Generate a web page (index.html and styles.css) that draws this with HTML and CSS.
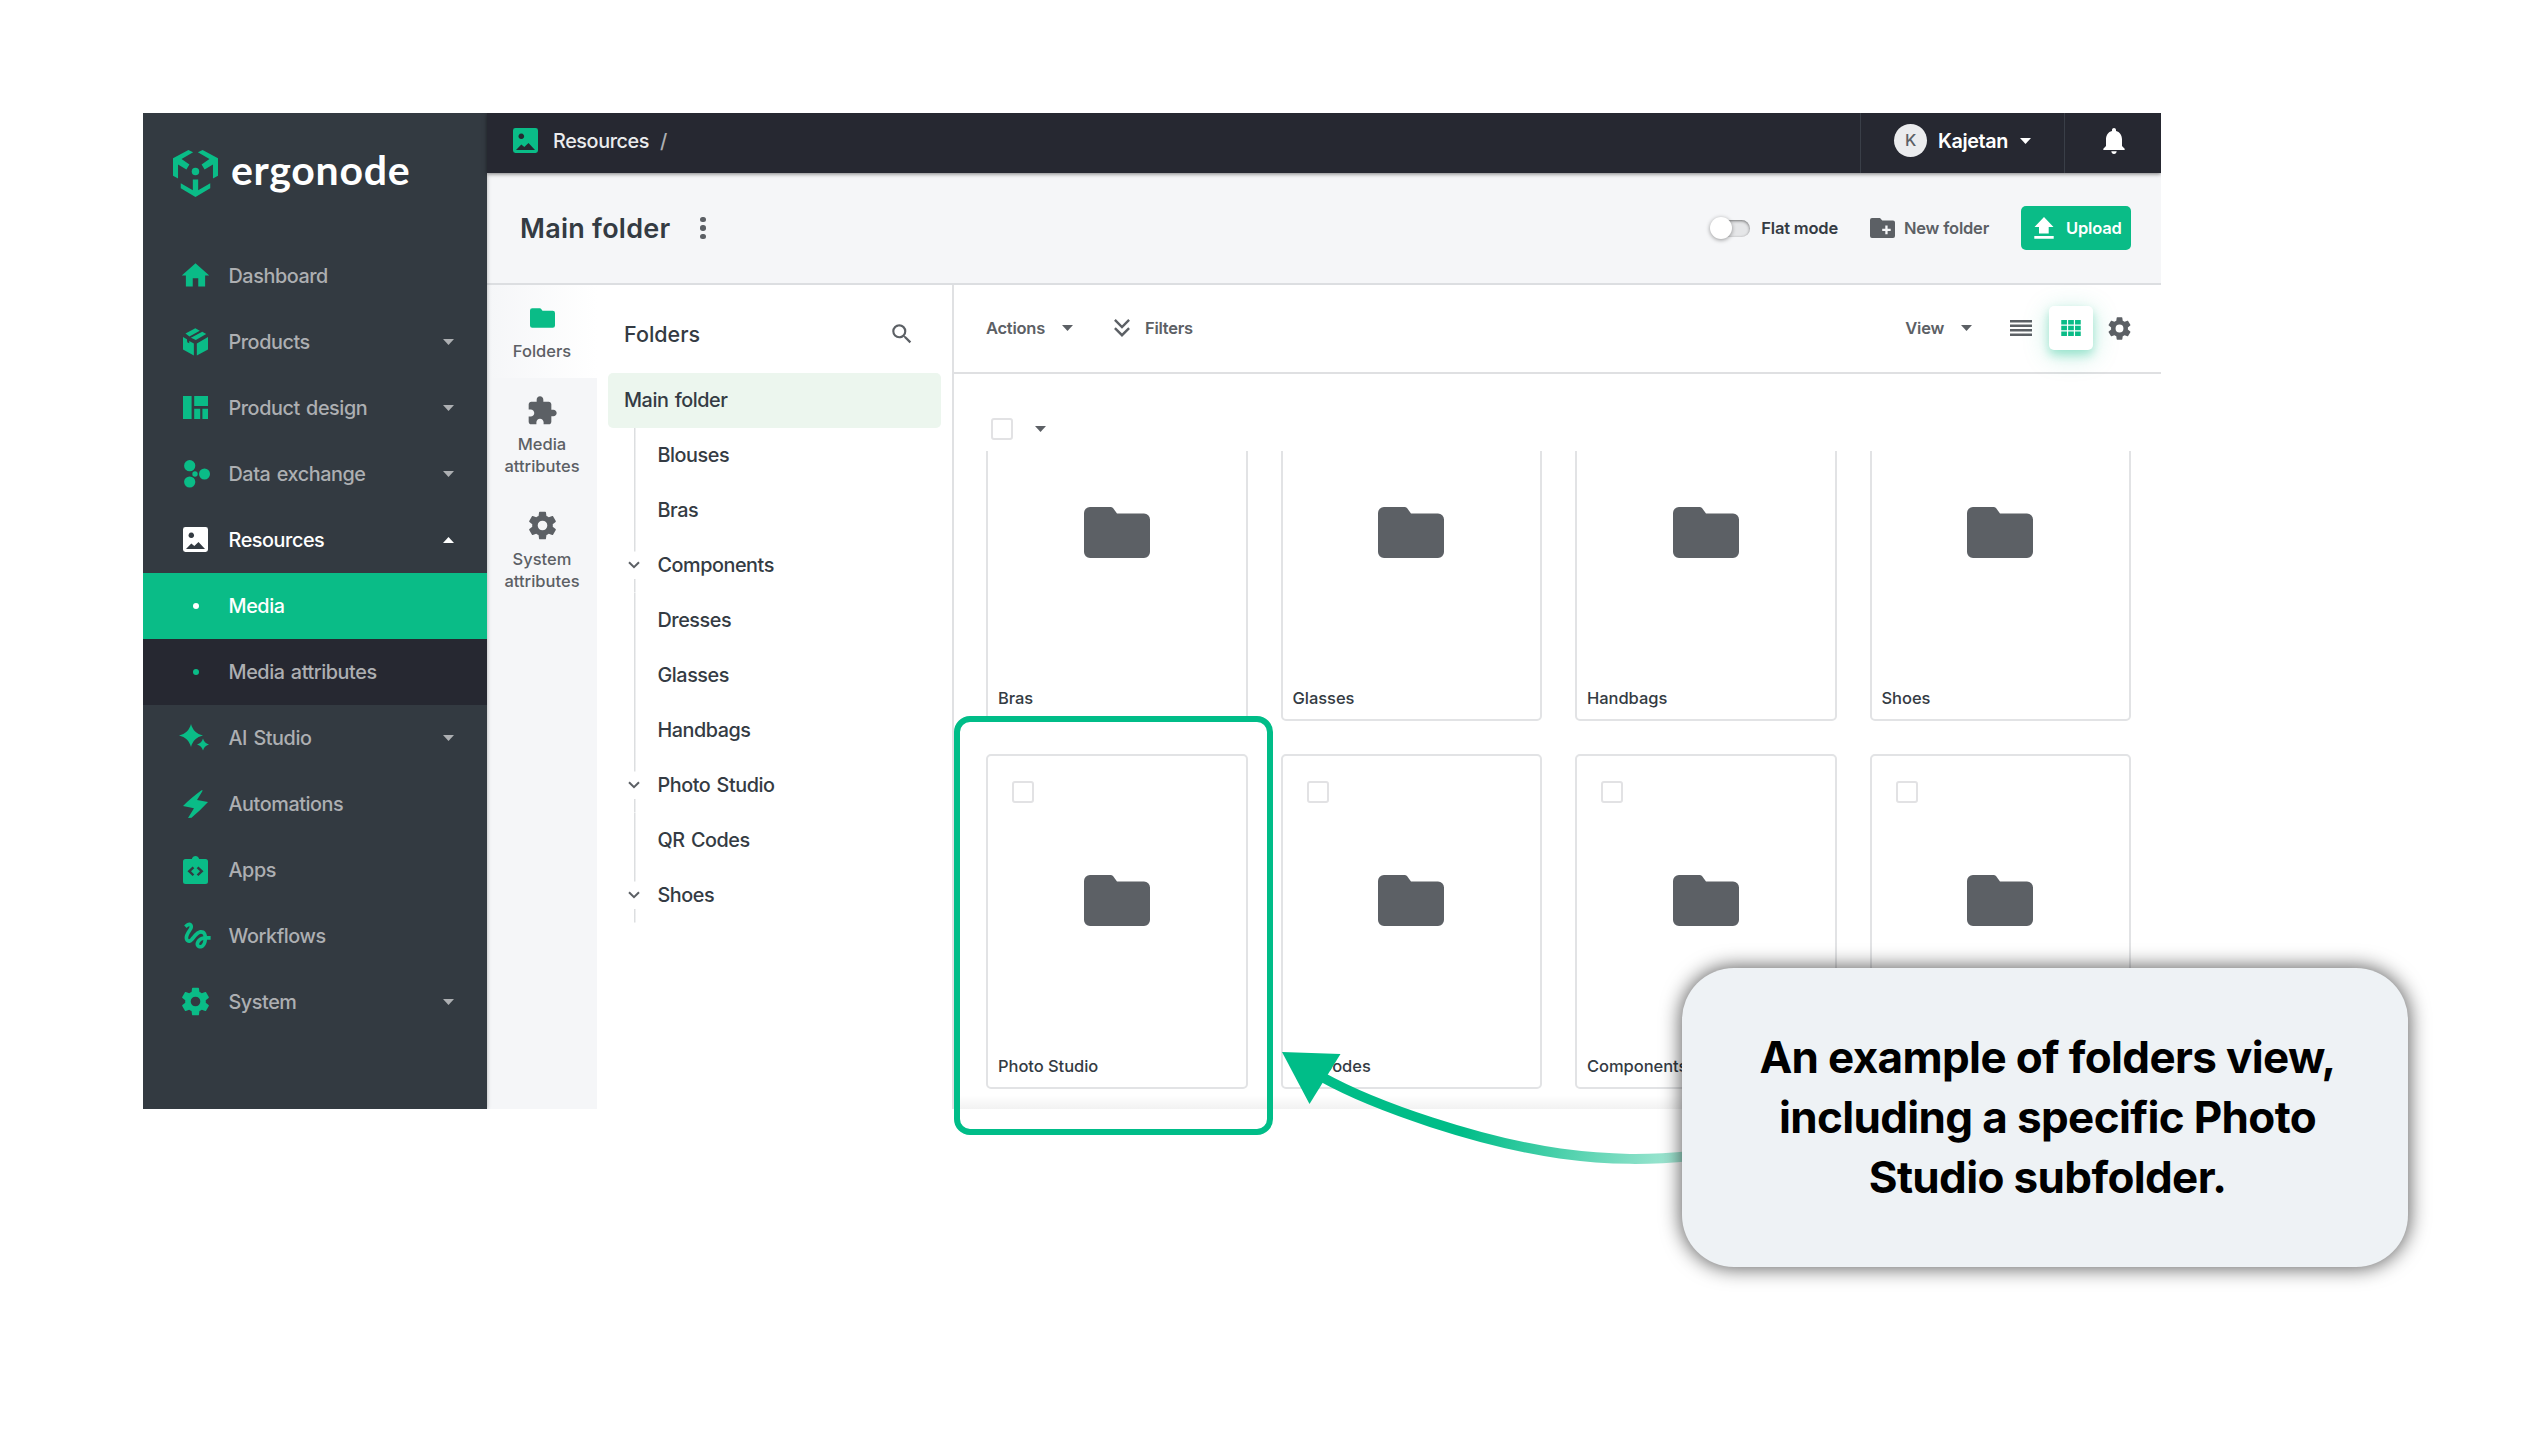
FILE: index.html
```html
<!DOCTYPE html>
<html lang="en">
<head>
    <meta charset="UTF-8">
    <meta name="viewport" content="width=device-width, initial-scale=1.0">
    <title>Media - Main folder</title>
    <link rel="stylesheet" href="styles.css">
</head>
<body>

<!-- icons -->
<svg class="sprite" aria-hidden="true">
    <symbol id="i-home" viewBox="0 0 24 24"><path d="M10 20v-6h4v6h5v-8h3L12 3 2 12h3v8z"/></symbol>
    <symbol id="i-box" viewBox="0 0 25.3 28"><path d="M2.5 5.5 12.5 0 17 2.5 6.5 8.5zM8 9.8 19.5 3.7l4 2.3L13 12zM0 9l4 2.3.3 2.9 2 1.1V13l4.7 2.5v12.2L0 21.5zM14 15.5 25.3 9v12.5L14 27.7z"/></symbol>
    <symbol id="i-design" viewBox="0 0 25 23"><path d="M0 0h8.6v23H0zM11.2 0H25v10H11.2zM11.2 12.7h6V23h-6zM19.4 12.7H25V23h-5.6z"/></symbol>
    <symbol id="i-data" viewBox="0 0 26 28"><circle cx="5.7" cy="5.7" r="5.6"/><circle cx="5.7" cy="22" r="5.6"/><circle cx="20.5" cy="14" r="5.5"/><circle cx="11" cy="14" r="2.7"/></symbol>
    <symbol id="i-image" viewBox="0 0 25 25"><path fill-rule="evenodd" d="M2.4 0h20.2A2.4 2.4 0 0 1 25 2.4v20.2a2.4 2.4 0 0 1-2.4 2.4H2.4A2.4 2.4 0 0 1 0 22.6V2.4A2.4 2.4 0 0 1 2.4 0zM8.3 5.5a2.8 2.8 0 1 0 .01 0zM3 22h19l-6.5-7-4.2 4-3-2.5z"/></symbol>
    <symbol id="i-spark" viewBox="0 0 30 27"><path d="M12 0c1.6 6 5.5 10 12 11.5C17.5 13 13.6 17 12 23 10.4 17 6.5 13 0 11.5 6.5 10 10.4 6 12 0zM24 14.5c.8 3 2.6 5 6 6-3.4 1-5.2 3-6 6-.8-3-2.6-5-6-6 3.4-1 5.2-3 6-6z"/></symbol>
    <symbol id="i-bolt" viewBox="0 0 25 28"><path d="M18.5.2C12 5 5 10.5 0 16l11 2.2-6 9.8 3.5-.3C14 23 20 17.5 25 12L14 10 19.8.4z"/></symbol>
    <symbol id="i-apps" viewBox="0 0 25 28"><path fill-rule="evenodd" d="M2.5 3h6.3c.6-1.8 2-3 3.7-3s3.1 1.2 3.7 3h6.3A2.5 2.5 0 0 1 25 5.5v20a2.5 2.5 0 0 1-2.5 2.5h-20A2.5 2.5 0 0 1 0 25.5v-20A2.5 2.5 0 0 1 2.5 3zM9.6 10.5 4.5 15.3l5.1 4.8 1.7-1.7L8 15.3l3.3-3.1zM15.4 10.5l-1.7 1.7 3.3 3.1-3.3 3.1 1.7 1.7 5.1-4.8z"/></symbol>
    <symbol id="i-flow" viewBox="0 0 24 24"><path d="M4.59 6.89c.7-.71 1.4-1.35 1.71-1.22.5.2 0 1.03-.3 1.52-.25.42-2.86 3.89-2.86 6.31 0 1.28.48 2.34 1.34 2.98.75.56 1.74.73 2.64.46 1.07-.31 1.95-1.4 3.06-2.77 1.21-1.49 2.83-3.44 4.08-3.44 1.63 0 1.65 1.01 1.76 1.79-3.78.64-5.38 3.67-5.38 5.37 0 1.7 1.44 3.09 3.21 3.09 1.63 0 4.29-1.33 4.69-6.1H21v-2.5h-2.47c-.15-1.65-1.09-4.2-4.03-4.2-2.25 0-4.18 1.91-4.94 2.84-.58.73-2.06 2.48-2.29 2.72-.25.3-.68.84-1.11.84-.45 0-.72-.83-.36-1.92.35-1.09 1.4-2.86 1.85-3.52.78-1.14 1.3-1.92 1.3-3.28C8.95 3.69 7.31 3 6.44 3 5.12 3 3.97 4 3.72 4.25c-.36.36-.66.66-.88.93l1.75 1.71zm9.29 11.66c-.31 0-.74-.26-.74-.72 0-.6.73-2.2 2.87-2.76-.3 2.69-1.43 3.48-2.13 3.48z"/></symbol>
    <symbol id="i-cog" viewBox="0 0 24 24"><path d="M12,15.5A3.5,3.5 0 0,1 8.5,12A3.5,3.5 0 0,1 12,8.5A3.5,3.5 0 0,1 15.5,12A3.5,3.5 0 0,1 12,15.5M19.43,12.97C19.47,12.65 19.5,12.33 19.5,12C19.5,11.67 19.47,11.34 19.43,11L21.54,9.37C21.73,9.22 21.78,8.95 21.66,8.73L19.66,5.27C19.54,5.05 19.27,4.96 19.05,5.05L16.56,6.05C16.04,5.66 15.5,5.32 14.87,5.07L14.5,2.42C14.46,2.18 14.25,2 14,2H10C9.75,2 9.54,2.18 9.5,2.42L9.13,5.07C8.5,5.32 7.96,5.66 7.44,6.05L4.95,5.05C4.73,4.96 4.46,5.05 4.34,5.27L2.34,8.73C2.21,8.95 2.27,9.22 2.46,9.37L4.57,11C4.53,11.34 4.5,11.67 4.5,12C4.5,12.33 4.53,12.65 4.57,12.97L2.46,14.63C2.27,14.78 2.21,15.05 2.34,15.27L4.34,18.73C4.46,18.95 4.73,19.03 4.95,18.95L7.44,17.94C7.96,18.34 8.5,18.68 9.13,18.93L9.5,21.58C9.54,21.82 9.75,22 10,22H14C14.25,22 14.46,21.82 14.5,21.58L14.87,18.93C15.5,18.67 16.04,18.34 16.56,17.94L19.05,18.95C19.27,19.03 19.54,18.95 19.66,18.73L21.66,15.27C21.78,15.05 21.73,14.78 21.54,14.63L19.43,12.97Z"/></symbol>
    <symbol id="i-folder" viewBox="0 0 66 51"><path d="M6 0h20.5q1.5 0 2.5 1l4 5.5h27a6 6 0 0 1 6 6V45a6 6 0 0 1-6 6H6a6 6 0 0 1-6-6V6a6 6 0 0 1 6-6z"/></symbol>
    <symbol id="i-puzzle" viewBox="0 0 24 24"><path d="M20.5 11H19V7c0-1.1-.9-2-2-2h-4V3.5C13 2.12 11.88 1 10.5 1S8 2.12 8 3.5V5H4c-1.1 0-1.99.9-1.99 2v3.8H3.5c1.49 0 2.7 1.21 2.7 2.7s-1.21 2.7-2.7 2.7H2V20c0 1.1.9 2 2 2h3.8v-1.5c0-1.49 1.21-2.7 2.7-2.7 1.49 0 2.7 1.21 2.7 2.7V22H17c1.1 0 2-.9 2-2v-4h1.5c1.38 0 2.5-1.12 2.5-2.5S21.88 11 20.5 11z"/></symbol>
    <symbol id="i-search" viewBox="0 0 24 24"><path d="M15.5 14h-.79l-.28-.27A6.471 6.471 0 0 0 16 9.5 6.5 6.5 0 1 0 9.5 16c1.61 0 3.09-.59 4.23-1.57l.27.28v.79l5 4.99L20.49 19l-4.99-5zm-6 0C7.01 14 5 11.99 5 9.5S7.01 5 9.5 5 14 7.01 14 9.5 11.99 14 9.5 14z"/></symbol>
    <symbol id="i-bell" viewBox="4 2.5 16 19.5"><path d="M12 22c1.1 0 2-.9 2-2h-4c0 1.1.89 2 2 2zm6-6v-5c0-3.07-1.64-5.64-4.5-6.32V4c0-.83-.67-1.5-1.5-1.5s-1.5.67-1.5 1.5v.68C7.63 5.36 6 7.92 6 11v5l-2 2v1h16v-1l-2-2z"/></symbol>
    <symbol id="i-newfolder" viewBox="0 0 25 20"><path fill-rule="evenodd" d="M2 0h8l2.3 2.4H23a2 2 0 0 1 2 2V18a2 2 0 0 1-2 2H2a2 2 0 0 1-2-2V2a2 2 0 0 1 2-2zM15.3 7.5v3.2h-3.1v2.3h3.1v3.2h2.3V13h3.1v-2.3h-3.1V7.5z"/></symbol>
    <symbol id="i-upload" viewBox="0 0 20 22"><path d="M10 0 19.5 10H14.7v6.5H5V10H.5zM.3 19h19.4v2.7H.3z"/></symbol>
    <symbol id="i-caret" viewBox="0 0 11 6"><path d="M0 0h11L5.5 6z"/></symbol>
    <symbol id="i-chevron" viewBox="0 0 12 8"><path d="M1 1.2 6 6.2l5-5" fill="none" stroke="currentColor" stroke-width="2"/></symbol>
    <symbol id="i-filters" viewBox="0 0 16 18"><path d="M.9.9 8 8 15.1.9M.9 9.1 8 16.2l7.1-7.1" fill="none" stroke="currentColor" stroke-width="2.4"/></symbol>
    <symbol id="i-list" viewBox="0 0 22 16"><path d="M0 0h22v2.5H0zM0 4.5h22V7H0zM0 9h22v2.5H0zM0 13.5h22V16H0z"/></symbol>
    <symbol id="i-grid" viewBox="0 0 19.5 16"><path d="M0 0h5.7v4.5H0zM6.9 0h5.7v4.5H6.9zM13.8 0h5.7v4.5h-5.7zM0 5.7h5.7v4.5H0zM6.9 5.7h5.7v4.5H6.9zM13.8 5.7h5.7v4.5h-5.7zM0 11.5h5.7V16H0zM6.9 11.5h5.7V16H6.9zM13.8 11.5h5.7V16h-5.7z"/></symbol>
</svg>

<div class="app">

    <aside class="sidebar">
        <div class="logo">
            <svg class="logo-mark" viewBox="0 0 44.7 46.7"><path d="M0 8.3 15.3 0 20 2.3 8.5 9l7.8 5.3-3 5L5 14.3v14L0 25.7zM44.7 8.3 29.4 0l-4.7 2.3L36.2 9l-7.8 5.3 3 5 8.3-5v14l5-2.6zM19.7 29.3H25V40l12-7v5L22.3 46.7 7.7 38v-5l12 7z"/><circle cx="22.3" cy="21.3" r="3.7"/></svg>
            <span class="logo-text">ergonode</span>
        </div>
        <nav class="nav">
            <a class="nav-item"><span class="nav-icon"><svg width="33" height="33"><use href="#i-home"/></svg></span>Dashboard</a>
            <a class="nav-item"><span class="nav-icon"><svg width="25" height="28"><use href="#i-box"/></svg></span>Products<svg class="caret"><use href="#i-caret"/></svg></a>
            <a class="nav-item"><span class="nav-icon"><svg width="25" height="23"><use href="#i-design"/></svg></span>Product design<svg class="caret"><use href="#i-caret"/></svg></a>
            <a class="nav-item"><span class="nav-icon shift"><svg width="26" height="28"><use href="#i-data"/></svg></span>Data exchange<svg class="caret"><use href="#i-caret"/></svg></a>
            <a class="nav-item open"><span class="nav-icon"><svg width="25" height="25"><use href="#i-image"/></svg></span>Resources<svg class="caret up"><use href="#i-caret"/></svg></a>
            <a class="nav-item sub active"><span class="nav-icon"><i class="dot"></i></span>Media</a>
            <a class="nav-item sub"><span class="nav-icon"><i class="dot"></i></span>Media attributes</a>
            <a class="nav-item"><span class="nav-icon shift-left"><svg width="30" height="27"><use href="#i-spark"/></svg></span>AI Studio<svg class="caret"><use href="#i-caret"/></svg></a>
            <a class="nav-item"><span class="nav-icon"><svg width="25" height="28"><use href="#i-bolt"/></svg></span>Automations</a>
            <a class="nav-item"><span class="nav-icon"><svg width="25" height="28"><use href="#i-apps"/></svg></span>Apps</a>
            <a class="nav-item"><span class="nav-icon shift"><svg width="35" height="35"><use href="#i-flow"/></svg></span>Workflows</a>
            <a class="nav-item"><span class="nav-icon"><svg width="33" height="33"><use href="#i-cog"/></svg></span>System<svg class="caret"><use href="#i-caret"/></svg></a>
        </nav>
    </aside>

    <div class="page">
        <header class="topbar">
            <svg class="crumb-icon" width="25" height="25"><use href="#i-image"/></svg>
            <span class="crumb">Resources</span>
            <span class="slash">/</span>
            <div class="user">
                <span class="avatar">K</span>
                <span class="user-name">Kajetan</span>
                <svg class="caret"><use href="#i-caret"/></svg>
            </div>
            <div class="bell"><svg width="22" height="26"><use href="#i-bell"/></svg></div>
        </header>

        <div class="titlebar">
            <h1>Main folder</h1>
            <span class="kebab"><i></i><i></i><i></i></span>
            <label class="toggle"><span class="track"><span class="knob"></span></span>Flat mode</label>
            <button class="new-folder"><svg width="25" height="20"><use href="#i-newfolder"/></svg>New folder</button>
            <button class="upload"><svg width="20" height="22"><use href="#i-upload"/></svg>Upload</button>
        </div>

        <div class="content">
            <div class="tabs">
                <a class="tab selected"><span class="tab-icon"><svg width="25" height="20"><use href="#i-folder"/></svg></span>Folders</a>
                <a class="tab"><span class="tab-icon"><svg width="32" height="32"><use href="#i-puzzle"/></svg></span>Media attributes</a>
                <a class="tab"><span class="tab-icon"><svg width="33" height="33"><use href="#i-cog"/></svg></span>System attributes</a>
            </div>

            <section class="tree">
                <div class="tree-head">
                    <h2>Folders</h2>
                    <svg width="26" height="26"><use href="#i-search"/></svg>
                </div>
                <div class="tree-root">Main folder</div>
                <ul class="tree-list">
                    <li><span class="rail"></span>Blouses</li>
                    <li><span class="rail"></span>Bras</li>
                    <li><span class="rail split"><svg><use href="#i-chevron"/></svg></span>Components</li>
                    <li><span class="rail"></span>Dresses</li>
                    <li><span class="rail"></span>Glasses</li>
                    <li><span class="rail"></span>Handbags</li>
                    <li><span class="rail split"><svg><use href="#i-chevron"/></svg></span>Photo Studio</li>
                    <li><span class="rail"></span>QR Codes</li>
                    <li><span class="rail split"><svg><use href="#i-chevron"/></svg></span>Shoes</li>
                </ul>
            </section>

            <section class="browser">
                <div class="toolbar">
                    <span class="tool">Actions</span>
                    <svg class="caret"><use href="#i-caret"/></svg>
                    <svg class="filters-icon" width="16" height="18"><use href="#i-filters"/></svg>
                    <span class="tool">Filters</span>
                    <span class="tool view">View</span>
                    <svg class="caret"><use href="#i-caret"/></svg>
                    <svg class="list-icon" width="22" height="16"><use href="#i-list"/></svg>
                    <span class="grid-button"><svg width="20" height="16"><use href="#i-grid"/></svg></span>
                    <svg class="cog" width="27" height="27"><use href="#i-cog"/></svg>
                </div>
                <div class="select-row">
                    <span class="checkbox"></span>
                    <svg class="caret"><use href="#i-caret"/></svg>
                </div>
                <div class="scroller">
                    <div class="cards">
                        <div class="card"><span class="checkbox"></span><svg><use href="#i-folder"/></svg><span class="name">Bras</span></div>
                        <div class="card"><span class="checkbox"></span><svg><use href="#i-folder"/></svg><span class="name">Glasses</span></div>
                        <div class="card"><span class="checkbox"></span><svg><use href="#i-folder"/></svg><span class="name">Handbags</span></div>
                        <div class="card"><span class="checkbox"></span><svg><use href="#i-folder"/></svg><span class="name">Shoes</span></div>
                        <div class="card"><span class="checkbox"></span><svg><use href="#i-folder"/></svg><span class="name">Photo Studio</span></div>
                        <div class="card"><span class="checkbox"></span><svg><use href="#i-folder"/></svg><span class="name">QR Codes</span></div>
                        <div class="card"><span class="checkbox"></span><svg><use href="#i-folder"/></svg><span class="name">Components</span></div>
                        <div class="card"><span class="checkbox"></span><svg><use href="#i-folder"/></svg></div>
                    </div>
                </div>
            </section>
        </div>
    </div>
</div>

<!-- annotations over the app -->
<div class="highlight"></div>
<svg class="arrow" viewBox="1270 1040 430 140">
    <defs>
        <linearGradient id="fade" gradientUnits="userSpaceOnUse" x1="1462" y1="1130" x2="1690" y2="1170">
            <stop offset="0" stop-color="#00bd88"/>
            <stop offset="1" stop-color="#ade9d8"/>
        </linearGradient>
    </defs>
    <path d="M1322 1077C1376 1107 1480 1142 1560 1153.5C1612 1160.5 1650 1160 1692 1156" fill="none" stroke="url(#fade)" stroke-width="10"/>
    <path d="M1282 1052l58.500 2-31 50z" fill="#00bd88"/>
</svg>
<div class="callout">An example of folders view, including a specific Photo Studio subfolder.</div>

</body>
</html>
```
FILE: styles.css
```css
* {
    box-sizing: border-box;
}
body {
    margin: 0;
    padding: 113px 0 0 143px;
    width: 2546px;
    height: 1432px;
    overflow: hidden;
    position: relative;
    background-color: #fff;
    font-family: Inter, "Liberation Sans", sans-serif;
    font-weight: 500;
    color: #343b43;
}
svg {
    display: block;
    flex: none;
    fill: currentColor;
}
h1, h2, ul {
    margin: 0;
    padding: 0;
    list-style: none;
}
button {
    border: none;
    background: none;
    padding: 0;
    font: inherit;
    letter-spacing: inherit;
}
.sprite {
    position: absolute;
    width: 0;
    height: 0;
}
.app {
    display: flex;
    width: 2018px;
    height: 996px;
    overflow: hidden;
}
.caret {
    width: 11px;
    height: 6px;
}
.caret.up {
    transform: rotate(180deg);
}

/* sidebar */
.sidebar {
    width: 344px;
    flex: none;
    background-color: #333a41;
    box-shadow: 0 0 4px rgba(0, 0, 0, 0.3);
    z-index: 1;
}
.logo {
    display: flex;
    align-items: flex-start;
    height: 130px;
    padding: 37px 0 0 30px;
}
.logo-mark {
    width: 45px;
    height: 47px;
    color: #0abc87;
}
.logo-text {
    margin: -3px 0 0 13px;
    font-family: Lato, sans-serif;
    font-weight: 700;
    font-size: 41px;
    line-height: 46px;
    letter-spacing: 0.7px;
    color: #fff;
}
.nav-item {
    display: flex;
    align-items: center;
    height: 65.97px;
    padding-right: 33px;
    font-size: 19.8px;
    letter-spacing: -0.42px;
    word-spacing: 1.5px;
    color: #adafb2;
}
.nav-icon {
    display: flex;
    justify-content: center;
    width: 105px;
    margin-right: -19.5px;
    color: #0abc87;
}
.nav-item .caret {
    margin-left: auto;
}
.shift {
    padding-left: 3px;
}
.shift-left {
    padding-right: 3px;
}
.nav-item.open,
.nav-item.open .nav-icon {
    color: #fff;
}
.sub {
    background-color: #262831;
}
.sub.active {
    background-color: #0abc87;
    color: #fff;
}
.dot {
    width: 6px;
    height: 6px;
    border-radius: 50%;
    background-color: #0abc87;
}
.active .dot {
    background-color: #fff;
}

/* top bar */
.page {
    flex: 1;
    display: flex;
    flex-direction: column;
}
.topbar {
    display: flex;
    align-items: center;
    height: 60px;
    flex: none;
    padding: 0 0 5px 26px;
    background-color: #262831;
    color: #fff;
    font-size: 19.8px;
    letter-spacing: -0.4px;
    box-shadow: 0 1px 4px rgba(0, 0, 0, 0.5);
    z-index: 1;
}
.crumb-icon {
    color: #0abc87;
}
.crumb {
    margin-left: 15px;
    color: #ebecee;
}
.slash {
    margin-left: 11px;
    color: #adafb2;
}
.user {
    display: flex;
    align-items: center;
    align-self: stretch;
    margin: 0 0 -5px auto;
    width: 204px;
    padding: 0 0 5px 33px;
    border-left: 1px solid #3a3f48;
    font-weight: 600;
}
.avatar {
    width: 33px;
    height: 33px;
    border-radius: 50%;
    background-color: #ebecee;
    color: #5c6065;
    font-size: 16.5px;
    font-weight: 500;
    line-height: 33px;
    text-align: center;
}
.user-name {
    margin: 0 12px 0 11px;
}
.bell {
    display: flex;
    align-items: center;
    align-self: stretch;
    margin-bottom: -5px;
    width: 97px;
    padding: 0 0 5px 38px;
    border-left: 1px solid #3a3f48;
}

/* title bar */
.titlebar {
    display: flex;
    align-items: center;
    height: 112px;
    flex: none;
    padding: 0 30px 0 33px;
    background-color: #f5f6f8;
    border-bottom: 2px solid #dcdee1;
    font-size: 16.5px;
    font-weight: 600;
    letter-spacing: -0.2px;
}
.titlebar h1 {
    font-size: 27px;
    font-weight: 600;
    letter-spacing: 0.25px;
}
.kebab {
    display: grid;
    gap: 3px;
    margin: 0 auto 0 30px;
}
.kebab i {
    width: 5.5px;
    height: 5.5px;
    border-radius: 50%;
    background-color: #5c6065;
}
.toggle {
    display: flex;
    align-items: center;
}
.track {
    width: 39px;
    height: 17px;
    margin-right: 11px;
    border-radius: 9px;
    background-color: #e5e6e8;
    box-shadow: inset 0 1px 3px rgba(0, 0, 0, 0.5);
    display: flex;
    align-items: center;
}
.knob {
    width: 22px;
    height: 22px;
    margin-left: -1px;
    flex: none;
    border-radius: 50%;
    background-color: #fff;
    box-shadow: 0 1px 4px rgba(0, 0, 0, 0.4);
}
.new-folder {
    display: flex;
    align-items: center;
    gap: 9px;
    margin: 0 32px 0 32px;
    color: #5c6065;
}
.upload {
    display: flex;
    align-items: center;
    gap: 12px;
    width: 110px;
    height: 44px;
    padding-left: 13px;
    border-radius: 5px;
    background-color: #0abc87;
    color: #fff;
}

/* tabs on the left of the tree */
.content {
    display: flex;
    flex: 1;
    min-height: 0;
}
.tabs {
    width: 110px;
    flex: none;
    background-color: #f5f6f8;
}
.tab {
    display: flex;
    flex-direction: column;
    align-items: center;
    padding: 16px 10px;
    font-size: 16.5px;
    line-height: 22px;
    text-align: center;
    color: #5c6065;
}
.tab.selected {
    background: linear-gradient(to right, #f5f6f8, #fff);
}
.tab.selected svg {
    color: #0abc87;
}
.tab-icon {
    display: flex;
    align-items: center;
    height: 33px;
    margin-bottom: 6px;
}

/* folder tree */
.tree {
    width: 357px;
    flex: none;
    padding: 0 11px;
    border-right: 2px solid #e0e1e3;
    font-size: 19.8px;
    letter-spacing: -0.45px;
    word-spacing: 1.5px;
}
.tree-head {
    display: flex;
    align-items: center;
    justify-content: space-between;
    height: 87.5px;
    padding: 10px 26px 0 16px;
}
.tree-head h2 {
    font-size: 21.5px;
    font-weight: 500;
    letter-spacing: 0;
}
.tree-head svg {
    color: #5c6065;
}
.tree-root {
    height: 55px;
    padding-left: 16px;
    border-radius: 5px;
    background-color: #ecf6ee;
    line-height: 55px;
}
.tree-list li {
    display: flex;
    align-items: center;
    height: 55px;
    padding-left: 19px;
}
.rail {
    display: flex;
    align-items: center;
    justify-content: center;
    width: 14px;
    height: 100%;
    margin-right: 16.5px;
    background: linear-gradient(#dcdee0, #dcdee0) 7px 0 / 1.5px 100% no-repeat;
}
.rail.split {
    background-size: 1.5px 13.5px;
    background-image: linear-gradient(#dcdee0, #dcdee0), linear-gradient(#dcdee0, #dcdee0);
    background-position: 7px 0, 7px 100%;
}
.rail svg {
    width: 12px;
    height: 8px;
    margin-left: -1px;
    color: #5c6065;
}

/* media browser */
.browser {
    flex: 1;
    min-width: 0;
    display: flex;
    flex-direction: column;
}
.toolbar {
    display: flex;
    align-items: center;
    height: 89px;
    flex: none;
    padding: 0 28px 1px 32px;
    border-bottom: 2px solid #dfe0e2;
    color: #5c6065;
    font-size: 16.5px;
    font-weight: 600;
    letter-spacing: -0.25px;
}
.toolbar .caret {
    margin-left: 17px;
}
.filters-icon {
    margin: 0 15px 0 41px;
}
.view {
    margin-left: auto;
}
.list-icon {
    margin: 0 17px 0 38px;
}
.grid-button {
    display: flex;
    align-items: center;
    justify-content: center;
    width: 44px;
    height: 44px;
    margin-right: 13px;
    border-radius: 5px;
    background-color: #fff;
    color: #0abc87;
    box-shadow: 0 5px 10px rgba(10, 188, 135, 0.3), 0 5px 26px rgba(10, 188, 135, 0.25);
}
.select-row {
    display: flex;
    align-items: center;
    height: 77px;
    flex: none;
    padding: 33px 0 0 37px;
    color: #5c6065;
}
.select-row .caret {
    margin-left: 22px;
}
.checkbox {
    width: 22px;
    height: 22px;
    flex: none;
    border: 2px solid #e2e2e4;
    border-radius: 3px;
    background-color: #fff;
}
.scroller {
    position: relative;
    flex: 1;
    min-height: 0;
    overflow: hidden;
    padding: 0 30px 0 32px;
}
.scroller::after {
    content: "";
    position: absolute;
    left: 0;
    right: 0;
    bottom: 0;
    height: 14px;
    background: linear-gradient(rgba(0, 0, 0, 0), rgba(0, 0, 0, 0.05));
}
.cards {
    display: grid;
    grid-template-columns: repeat(4, 1fr);
    gap: 33px;
    margin-top: -65px;
}
.card {
    display: flex;
    flex-direction: column;
    height: 335px;
    padding: 25px 11px 10px 24px;
    border: 2px solid #e2e3e5;
    border-radius: 5px;
}
.card svg {
    width: 66px;
    height: 51px;
    margin: 72px 0 0 -13px;
    align-self: center;
    color: #5c6065;
}
.card .name {
    margin: auto 0 0 -14px;
    font-size: 16.5px;
    line-height: 22px;
    letter-spacing: -0.05px;
}

/* annotations */
.highlight {
    position: absolute;
    left: 954px;
    top: 716px;
    width: 319px;
    height: 419px;
    border: 6px solid #00bd88;
    border-radius: 16px;
}
.arrow {
    position: absolute;
    left: 1270px;
    top: 1040px;
    width: 430px;
    height: 140px;
}
.callout {
    position: absolute;
    left: 1682px;
    top: 968px;
    width: 726px;
    height: 299px;
    padding: 59px 60px 59px 65px;
    border-radius: 52px;
    background-color: #eef2f5;
    box-shadow: 0 0 20px 1px rgba(0, 0, 0, 0.65);
    color: #000;
    font-size: 44px;
    font-weight: 700;
    line-height: 60px;
    letter-spacing: -0.64px;
    text-align: center;
}
```
